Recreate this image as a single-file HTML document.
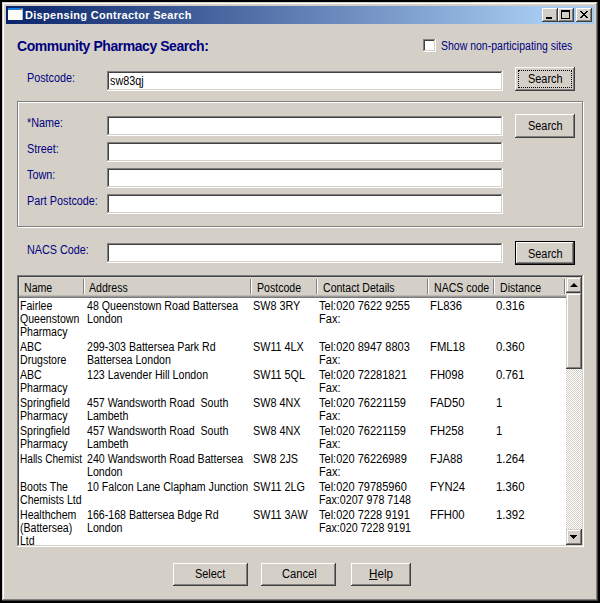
<!DOCTYPE html>
<html><head><meta charset="utf-8"><title>Dispensing Contractor Search</title>
<style>
html,body{margin:0;padding:0;}
body{width:600px;height:603px;background:#000;position:relative;overflow:hidden;font-family:"Liberation Sans", sans-serif;}
.b{position:absolute;box-sizing:border-box;}
.t{position:absolute;white-space:nowrap;transform-origin:0 0;font-family:"Liberation Sans", sans-serif;}
</style></head><body>
<div class="b" style="left:2px;top:2px;width:596px;height:599px;background:#d4d0c8;box-shadow:inset -1px -1px #404040, inset 1px 1px #d4d0c8, inset -2px -2px #808080, inset 2px 2px #fff;"></div>
<div class="b" style="left:6px;top:6px;width:588px;height:18px;background:linear-gradient(to right,#0a246a 0px,#a6caf0 536px);"></div>
<div class="b" style="left:8px;top:8px;width:15px;height:12px;background:#fdfdf8;border-top:2px solid #1d7ee0;border-right:1px solid #9cc4ee;box-sizing:border-box;"></div>
<div class="b" style="left:20px;top:9px;width:2px;height:1px;background:#f06a2a;"></div>
<div class="t" style="left:25px;top:9px;color:#fff;font-size:11px;line-height:13px;font-weight:bold;letter-spacing:0.3px;">Dispensing Contractor Search</div>
<div class="b" style="left:542px;top:8px;width:16px;height:14px;background:#d4d0c8;box-shadow:inset -1px -1px #404040, inset 1px 1px #fff, inset -2px -2px #808080;"></div>
<div class="b" style="left:558px;top:8px;width:16px;height:14px;background:#d4d0c8;box-shadow:inset -1px -1px #404040, inset 1px 1px #fff, inset -2px -2px #808080;"></div>
<div class="b" style="left:576px;top:8px;width:16px;height:14px;background:#d4d0c8;box-shadow:inset -1px -1px #404040, inset 1px 1px #fff, inset -2px -2px #808080;"></div>
<div class="b" style="left:546px;top:17px;width:6px;height:2px;background:#000;"></div>
<div class="b" style="left:561px;top:10px;width:9px;height:9px;border:1px solid #000;border-top-width:2px;box-sizing:border-box;"></div>
<svg class="b" style="left:580px;top:11px" width="8" height="7" shape-rendering="crispEdges"><rect x="0" y="0" width="1" height="1"/><rect x="1" y="0" width="1" height="1"/><rect x="6" y="0" width="1" height="1"/><rect x="7" y="0" width="1" height="1"/><rect x="1" y="1" width="1" height="1"/><rect x="2" y="1" width="1" height="1"/><rect x="5" y="1" width="1" height="1"/><rect x="6" y="1" width="1" height="1"/><rect x="2" y="2" width="1" height="1"/><rect x="3" y="2" width="1" height="1"/><rect x="4" y="2" width="1" height="1"/><rect x="5" y="2" width="1" height="1"/><rect x="3" y="3" width="1" height="1"/><rect x="4" y="3" width="1" height="1"/><rect x="2" y="4" width="1" height="1"/><rect x="3" y="4" width="1" height="1"/><rect x="4" y="4" width="1" height="1"/><rect x="5" y="4" width="1" height="1"/><rect x="1" y="5" width="1" height="1"/><rect x="2" y="5" width="1" height="1"/><rect x="5" y="5" width="1" height="1"/><rect x="6" y="5" width="1" height="1"/><rect x="0" y="6" width="1" height="1"/><rect x="1" y="6" width="1" height="1"/><rect x="6" y="6" width="1" height="1"/><rect x="7" y="6" width="1" height="1"/></svg>
<div class="t" style="left:17px;top:38px;color:#000080;font-size:14px;line-height:16px;font-weight:bold;letter-spacing:-0.45px;">Community Pharmacy Search:</div>
<div class="b" style="left:423px;top:39px;width:13px;height:13px;background:#fff;box-shadow:inset -1px -1px #fff, inset 1px 1px #808080, inset -2px -2px #d4d0c8, inset 2px 2px #404040;"></div>
<div class="t" style="left:441px;top:40px;color:#000080;font-size:12px;line-height:13px;font-weight:normal;transform:scaleX(0.875);">Show non-participating sites</div>
<div class="t" style="left:27px;top:72px;color:#000080;font-size:12px;line-height:13px;font-weight:normal;transform:scaleX(0.9);">Postcode:</div>
<div class="b" style="left:107px;top:71px;width:396px;height:20px;background:#fff;box-shadow:inset -1px -1px #fff, inset 1px 1px #808080, inset -2px -2px #d4d0c8, inset 2px 2px #404040;"></div>
<div class="t" style="left:110px;top:75px;color:#000;font-size:12px;line-height:13px;font-weight:normal;transform:scaleX(0.9);">sw83qj</div>
<div class="b" style="left:515px;top:67px;width:60px;height:24px;background:#d4d0c8;box-shadow:inset -1px -1px #404040, inset 1px 1px #fff, inset -2px -2px #808080;"></div>
<div class="b" style="left:518px;top:70px;width:54px;height:18px;border:1px dotted #000;box-sizing:border-box;"></div>
<div class="t" style="left:528px;top:73px;color:#000;font-size:12px;line-height:13px;font-weight:normal;transform:scaleX(0.91);">Search</div>
<div class="b" style="left:18px;top:102px;width:566px;height:126px;border:1px solid #fff;"></div>
<div class="b" style="left:17px;top:101px;width:566px;height:126px;border:1px solid #808080;"></div>
<div class="t" style="left:27px;top:117px;color:#000080;font-size:12px;line-height:13px;font-weight:normal;transform:scaleX(0.9);">*Name:</div>
<div class="b" style="left:107px;top:116px;width:396px;height:20px;background:#fff;box-shadow:inset -1px -1px #fff, inset 1px 1px #808080, inset -2px -2px #d4d0c8, inset 2px 2px #404040;"></div>
<div class="t" style="left:27px;top:143px;color:#000080;font-size:12px;line-height:13px;font-weight:normal;transform:scaleX(0.9);">Street:</div>
<div class="b" style="left:107px;top:142px;width:396px;height:20px;background:#fff;box-shadow:inset -1px -1px #fff, inset 1px 1px #808080, inset -2px -2px #d4d0c8, inset 2px 2px #404040;"></div>
<div class="t" style="left:27px;top:169px;color:#000080;font-size:12px;line-height:13px;font-weight:normal;transform:scaleX(0.9);">Town:</div>
<div class="b" style="left:107px;top:168px;width:396px;height:20px;background:#fff;box-shadow:inset -1px -1px #fff, inset 1px 1px #808080, inset -2px -2px #d4d0c8, inset 2px 2px #404040;"></div>
<div class="t" style="left:27px;top:195px;color:#000080;font-size:12px;line-height:13px;font-weight:normal;transform:scaleX(0.9);">Part Postcode:</div>
<div class="b" style="left:107px;top:194px;width:396px;height:20px;background:#fff;box-shadow:inset -1px -1px #fff, inset 1px 1px #808080, inset -2px -2px #d4d0c8, inset 2px 2px #404040;"></div>
<div class="b" style="left:515px;top:114px;width:60px;height:24px;background:#d4d0c8;box-shadow:inset -1px -1px #404040, inset 1px 1px #fff, inset -2px -2px #808080;"></div>
<div class="t" style="left:528px;top:120px;color:#000;font-size:12px;line-height:13px;font-weight:normal;transform:scaleX(0.91);">Search</div>
<div class="t" style="left:27px;top:244px;color:#000080;font-size:12px;line-height:13px;font-weight:normal;transform:scaleX(0.9);">NACS Code:</div>
<div class="b" style="left:107px;top:243px;width:396px;height:20px;background:#fff;box-shadow:inset -1px -1px #fff, inset 1px 1px #808080, inset -2px -2px #d4d0c8, inset 2px 2px #404040;"></div>
<div class="b" style="left:515px;top:241px;width:60px;height:24px;background:#000;"></div>
<div class="b" style="left:516px;top:242px;width:58px;height:22px;background:#d4d0c8;box-shadow:inset -1px -1px #404040, inset 1px 1px #fff, inset -2px -2px #808080;"></div>
<div class="t" style="left:528px;top:248px;color:#000;font-size:12px;line-height:13px;font-weight:normal;transform:scaleX(0.91);">Search</div>
<div class="b" style="left:17px;top:275px;width:567px;height:272px;background:#fff;box-shadow:inset -1px -1px #fff, inset 1px 1px #808080, inset -2px -2px #d4d0c8, inset 2px 2px #404040;"></div>
<div class="b" style="left:19px;top:277px;width:547px;height:21px;background:#d4d0c8;box-shadow:inset 0 -1px #7a7a7a, inset 0 -2px #999795, inset 0 -3px #bdbab4, inset 1px 1px #e0ddd6;"></div>
<div class="b" style="left:83px;top:279px;width:1px;height:15px;background:#808080;"></div>
<div class="b" style="left:84px;top:279px;width:1px;height:15px;background:#fff;"></div>
<div class="b" style="left:250px;top:279px;width:1px;height:15px;background:#808080;"></div>
<div class="b" style="left:251px;top:279px;width:1px;height:15px;background:#fff;"></div>
<div class="b" style="left:316px;top:279px;width:1px;height:15px;background:#808080;"></div>
<div class="b" style="left:317px;top:279px;width:1px;height:15px;background:#fff;"></div>
<div class="b" style="left:427px;top:279px;width:1px;height:15px;background:#808080;"></div>
<div class="b" style="left:428px;top:279px;width:1px;height:15px;background:#fff;"></div>
<div class="b" style="left:493px;top:279px;width:1px;height:15px;background:#808080;"></div>
<div class="b" style="left:494px;top:279px;width:1px;height:15px;background:#fff;"></div>
<div class="b" style="left:564px;top:279px;width:1px;height:15px;background:#808080;"></div>
<div class="b" style="left:565px;top:279px;width:1px;height:15px;background:#fff;"></div>
<div class="t" style="left:24px;top:282px;color:#000;font-size:12px;line-height:13px;font-weight:normal;transform:scaleX(0.88);">Name</div>
<div class="t" style="left:89px;top:282px;color:#000;font-size:12px;line-height:13px;font-weight:normal;transform:scaleX(0.88);">Address</div>
<div class="t" style="left:257px;top:282px;color:#000;font-size:12px;line-height:13px;font-weight:normal;transform:scaleX(0.88);">Postcode</div>
<div class="t" style="left:323px;top:282px;color:#000;font-size:12px;line-height:13px;font-weight:normal;transform:scaleX(0.88);">Contact Details</div>
<div class="t" style="left:434px;top:282px;color:#000;font-size:12px;line-height:13px;font-weight:normal;transform:scaleX(0.88);">NACS code</div>
<div class="t" style="left:500px;top:282px;color:#000;font-size:12px;line-height:13px;font-weight:normal;transform:scaleX(0.88);">Distance</div>
<div class="b" style="left:19px;top:298px;width:547px;height:247px;overflow:hidden;">
<div class="t" style="left:1px;top:2px;color:#000;font-size:12px;line-height:13px;font-weight:normal;transform:scaleX(0.88);">Fairlee</div>
<div class="t" style="left:1px;top:15px;color:#000;font-size:12px;line-height:13px;font-weight:normal;transform:scaleX(0.88);">Queenstown</div>
<div class="t" style="left:1px;top:28px;color:#000;font-size:12px;line-height:13px;font-weight:normal;transform:scaleX(0.88);">Pharmacy</div>
<div class="t" style="left:68px;top:2px;color:#000;font-size:12px;line-height:13px;font-weight:normal;transform:scaleX(0.885);">48 Queenstown Road Battersea</div>
<div class="t" style="left:68px;top:15px;color:#000;font-size:12px;line-height:13px;font-weight:normal;transform:scaleX(0.885);">London</div>
<div class="t" style="left:234px;top:2px;color:#000;font-size:12px;line-height:13px;font-weight:normal;transform:scaleX(0.9);">SW8 3RY</div>
<div class="t" style="left:300px;top:2px;color:#000;font-size:12px;line-height:13px;font-weight:normal;transform:scaleX(0.92);">Tel:020 7622 9255</div>
<div class="t" style="left:300px;top:15px;color:#000;font-size:12px;line-height:13px;font-weight:normal;transform:scaleX(0.92);">Fax:</div>
<div class="t" style="left:411px;top:2px;color:#000;font-size:12px;line-height:13px;font-weight:normal;transform:scaleX(0.94);">FL836</div>
<div class="t" style="left:477px;top:2px;color:#000;font-size:12px;line-height:13px;font-weight:normal;transform:scaleX(0.95);">0.316</div>
<div class="t" style="left:1px;top:43px;color:#000;font-size:12px;line-height:13px;font-weight:normal;transform:scaleX(0.88);">ABC</div>
<div class="t" style="left:1px;top:56px;color:#000;font-size:12px;line-height:13px;font-weight:normal;transform:scaleX(0.88);">Drugstore</div>
<div class="t" style="left:68px;top:43px;color:#000;font-size:12px;line-height:13px;font-weight:normal;transform:scaleX(0.885);">299-303 Battersea Park Rd</div>
<div class="t" style="left:68px;top:56px;color:#000;font-size:12px;line-height:13px;font-weight:normal;transform:scaleX(0.885);">Battersea London</div>
<div class="t" style="left:234px;top:43px;color:#000;font-size:12px;line-height:13px;font-weight:normal;transform:scaleX(0.9);">SW11 4LX</div>
<div class="t" style="left:300px;top:43px;color:#000;font-size:12px;line-height:13px;font-weight:normal;transform:scaleX(0.92);">Tel:020 8947 8803</div>
<div class="t" style="left:300px;top:56px;color:#000;font-size:12px;line-height:13px;font-weight:normal;transform:scaleX(0.92);">Fax:</div>
<div class="t" style="left:411px;top:43px;color:#000;font-size:12px;line-height:13px;font-weight:normal;transform:scaleX(0.94);">FML18</div>
<div class="t" style="left:477px;top:43px;color:#000;font-size:12px;line-height:13px;font-weight:normal;transform:scaleX(0.95);">0.360</div>
<div class="t" style="left:1px;top:71px;color:#000;font-size:12px;line-height:13px;font-weight:normal;transform:scaleX(0.88);">ABC</div>
<div class="t" style="left:1px;top:84px;color:#000;font-size:12px;line-height:13px;font-weight:normal;transform:scaleX(0.88);">Pharmacy</div>
<div class="t" style="left:68px;top:71px;color:#000;font-size:12px;line-height:13px;font-weight:normal;transform:scaleX(0.885);">123 Lavender Hill London</div>
<div class="t" style="left:234px;top:71px;color:#000;font-size:12px;line-height:13px;font-weight:normal;transform:scaleX(0.9);">SW11 5QL</div>
<div class="t" style="left:300px;top:71px;color:#000;font-size:12px;line-height:13px;font-weight:normal;transform:scaleX(0.92);">Tel:020 72281821</div>
<div class="t" style="left:300px;top:84px;color:#000;font-size:12px;line-height:13px;font-weight:normal;transform:scaleX(0.92);">Fax:</div>
<div class="t" style="left:411px;top:71px;color:#000;font-size:12px;line-height:13px;font-weight:normal;transform:scaleX(0.94);">FH098</div>
<div class="t" style="left:477px;top:71px;color:#000;font-size:12px;line-height:13px;font-weight:normal;transform:scaleX(0.95);">0.761</div>
<div class="t" style="left:1px;top:99px;color:#000;font-size:12px;line-height:13px;font-weight:normal;transform:scaleX(0.88);">Springfield</div>
<div class="t" style="left:1px;top:112px;color:#000;font-size:12px;line-height:13px;font-weight:normal;transform:scaleX(0.88);">Pharmacy</div>
<div class="t" style="left:68px;top:99px;color:#000;font-size:12px;line-height:13px;font-weight:normal;transform:scaleX(0.885);">457 Wandsworth Road &nbsp;South</div>
<div class="t" style="left:68px;top:112px;color:#000;font-size:12px;line-height:13px;font-weight:normal;transform:scaleX(0.885);">Lambeth</div>
<div class="t" style="left:234px;top:99px;color:#000;font-size:12px;line-height:13px;font-weight:normal;transform:scaleX(0.9);">SW8 4NX</div>
<div class="t" style="left:300px;top:99px;color:#000;font-size:12px;line-height:13px;font-weight:normal;transform:scaleX(0.92);">Tel:020 76221159</div>
<div class="t" style="left:300px;top:112px;color:#000;font-size:12px;line-height:13px;font-weight:normal;transform:scaleX(0.92);">Fax:</div>
<div class="t" style="left:411px;top:99px;color:#000;font-size:12px;line-height:13px;font-weight:normal;transform:scaleX(0.94);">FAD50</div>
<div class="t" style="left:477px;top:99px;color:#000;font-size:12px;line-height:13px;font-weight:normal;transform:scaleX(0.95);">1</div>
<div class="t" style="left:1px;top:127px;color:#000;font-size:12px;line-height:13px;font-weight:normal;transform:scaleX(0.88);">Springfield</div>
<div class="t" style="left:1px;top:140px;color:#000;font-size:12px;line-height:13px;font-weight:normal;transform:scaleX(0.88);">Pharmacy</div>
<div class="t" style="left:68px;top:127px;color:#000;font-size:12px;line-height:13px;font-weight:normal;transform:scaleX(0.885);">457 Wandsworth Road &nbsp;South</div>
<div class="t" style="left:68px;top:140px;color:#000;font-size:12px;line-height:13px;font-weight:normal;transform:scaleX(0.885);">Lambeth</div>
<div class="t" style="left:234px;top:127px;color:#000;font-size:12px;line-height:13px;font-weight:normal;transform:scaleX(0.9);">SW8 4NX</div>
<div class="t" style="left:300px;top:127px;color:#000;font-size:12px;line-height:13px;font-weight:normal;transform:scaleX(0.92);">Tel:020 76221159</div>
<div class="t" style="left:300px;top:140px;color:#000;font-size:12px;line-height:13px;font-weight:normal;transform:scaleX(0.92);">Fax:</div>
<div class="t" style="left:411px;top:127px;color:#000;font-size:12px;line-height:13px;font-weight:normal;transform:scaleX(0.94);">FH258</div>
<div class="t" style="left:477px;top:127px;color:#000;font-size:12px;line-height:13px;font-weight:normal;transform:scaleX(0.95);">1</div>
<div class="t" style="left:1px;top:155px;color:#000;font-size:12px;line-height:13px;font-weight:normal;transform:scaleX(0.84);">Halls Chemist</div>
<div class="t" style="left:68px;top:155px;color:#000;font-size:12px;line-height:13px;font-weight:normal;transform:scaleX(0.885);">240 Wandsworth Road Battersea</div>
<div class="t" style="left:68px;top:168px;color:#000;font-size:12px;line-height:13px;font-weight:normal;transform:scaleX(0.885);">London</div>
<div class="t" style="left:234px;top:155px;color:#000;font-size:12px;line-height:13px;font-weight:normal;transform:scaleX(0.9);">SW8 2JS</div>
<div class="t" style="left:300px;top:155px;color:#000;font-size:12px;line-height:13px;font-weight:normal;transform:scaleX(0.92);">Tel:020 76226989</div>
<div class="t" style="left:300px;top:168px;color:#000;font-size:12px;line-height:13px;font-weight:normal;transform:scaleX(0.92);">Fax:</div>
<div class="t" style="left:411px;top:155px;color:#000;font-size:12px;line-height:13px;font-weight:normal;transform:scaleX(0.94);">FJA88</div>
<div class="t" style="left:477px;top:155px;color:#000;font-size:12px;line-height:13px;font-weight:normal;transform:scaleX(0.95);">1.264</div>
<div class="t" style="left:1px;top:183px;color:#000;font-size:12px;line-height:13px;font-weight:normal;transform:scaleX(0.88);">Boots The</div>
<div class="t" style="left:1px;top:196px;color:#000;font-size:12px;line-height:13px;font-weight:normal;transform:scaleX(0.88);">Chemists Ltd</div>
<div class="t" style="left:68px;top:183px;color:#000;font-size:12px;line-height:13px;font-weight:normal;transform:scaleX(0.885);">10 Falcon Lane Clapham Junction</div>
<div class="t" style="left:234px;top:183px;color:#000;font-size:12px;line-height:13px;font-weight:normal;transform:scaleX(0.9);">SW11 2LG</div>
<div class="t" style="left:300px;top:183px;color:#000;font-size:12px;line-height:13px;font-weight:normal;transform:scaleX(0.92);">Tel:020 79785960</div>
<div class="t" style="left:300px;top:196px;color:#000;font-size:12px;line-height:13px;font-weight:normal;transform:scaleX(0.89);">Fax:0207 978 7148</div>
<div class="t" style="left:411px;top:183px;color:#000;font-size:12px;line-height:13px;font-weight:normal;transform:scaleX(0.94);">FYN24</div>
<div class="t" style="left:477px;top:183px;color:#000;font-size:12px;line-height:13px;font-weight:normal;transform:scaleX(0.95);">1.360</div>
<div class="t" style="left:1px;top:211px;color:#000;font-size:12px;line-height:13px;font-weight:normal;transform:scaleX(0.88);">Healthchem</div>
<div class="t" style="left:1px;top:224px;color:#000;font-size:12px;line-height:13px;font-weight:normal;transform:scaleX(0.88);">(Battersea)</div>
<div class="t" style="left:1px;top:237px;color:#000;font-size:12px;line-height:13px;font-weight:normal;transform:scaleX(0.88);">Ltd</div>
<div class="t" style="left:68px;top:211px;color:#000;font-size:12px;line-height:13px;font-weight:normal;transform:scaleX(0.885);">166-168 Battersea Bdge Rd</div>
<div class="t" style="left:68px;top:224px;color:#000;font-size:12px;line-height:13px;font-weight:normal;transform:scaleX(0.885);">London</div>
<div class="t" style="left:234px;top:211px;color:#000;font-size:12px;line-height:13px;font-weight:normal;transform:scaleX(0.9);">SW11 3AW</div>
<div class="t" style="left:300px;top:211px;color:#000;font-size:12px;line-height:13px;font-weight:normal;transform:scaleX(0.92);">Tel:020 7228 9191</div>
<div class="t" style="left:300px;top:224px;color:#000;font-size:12px;line-height:13px;font-weight:normal;transform:scaleX(0.89);">Fax:020 7228 9191</div>
<div class="t" style="left:411px;top:211px;color:#000;font-size:12px;line-height:13px;font-weight:normal;transform:scaleX(0.94);">FFH00</div>
<div class="t" style="left:477px;top:211px;color:#000;font-size:12px;line-height:13px;font-weight:normal;transform:scaleX(0.95);">1.392</div>
</div>
<div class="b" style="left:566px;top:293px;width:16px;height:236px;background-color:#fff;background-image:conic-gradient(#d4d0c8 25%,#fff 0 50%,#d4d0c8 0 75%,#fff 0);background-size:2px 2px;"></div>
<div class="b" style="left:566px;top:277px;width:16px;height:16px;background:#d4d0c8;box-shadow:inset -1px -1px #404040, inset 1px 1px #d4d0c8, inset -2px -2px #808080, inset 2px 2px #fff;"></div>
<div class="b" style="left:566px;top:293px;width:16px;height:76px;background:#d4d0c8;box-shadow:inset -1px -1px #404040, inset 1px 1px #d4d0c8, inset -2px -2px #808080, inset 2px 2px #fff;"></div>
<div class="b" style="left:566px;top:529px;width:16px;height:16px;background:#d4d0c8;box-shadow:inset -1px -1px #404040, inset 1px 1px #d4d0c8, inset -2px -2px #808080, inset 2px 2px #fff;"></div>
<svg class="b" style="left:570px;top:283px" width="8" height="5"><path d="M3.5 0h1v1h1v1h1v1h1v1h-7v-1h1v-1h1v-1h1z" fill="#000"/></svg>
<svg class="b" style="left:570px;top:535px" width="8" height="5"><path d="M0 0h7v1h-1v1h-1v1h-1v1h-1v-1h-1v-1h-1v-1h-1z" fill="#000"/></svg>
<div class="b" style="left:173px;top:563px;width:75px;height:23px;background:#d4d0c8;box-shadow:inset -1px -1px #404040, inset 1px 1px #fff, inset -2px -2px #808080;"></div>
<div class="t" style="left:195px;top:568px;color:#000;font-size:12px;line-height:13px;font-weight:normal;transform:scaleX(0.91);">Select</div>
<div class="b" style="left:261px;top:563px;width:75px;height:23px;background:#d4d0c8;box-shadow:inset -1px -1px #404040, inset 1px 1px #fff, inset -2px -2px #808080;"></div>
<div class="t" style="left:282px;top:568px;color:#000;font-size:12px;line-height:13px;font-weight:normal;transform:scaleX(0.93);">Cancel</div>
<div class="b" style="left:351px;top:563px;width:60px;height:23px;background:#d4d0c8;box-shadow:inset -1px -1px #404040, inset 1px 1px #fff, inset -2px -2px #808080;"></div>
<div class="t" style="left:369px;top:568px;color:#000;font-size:12px;line-height:13px;font-weight:normal;transform:scaleX(0.97);"><u>H</u>elp</div>
</body></html>
